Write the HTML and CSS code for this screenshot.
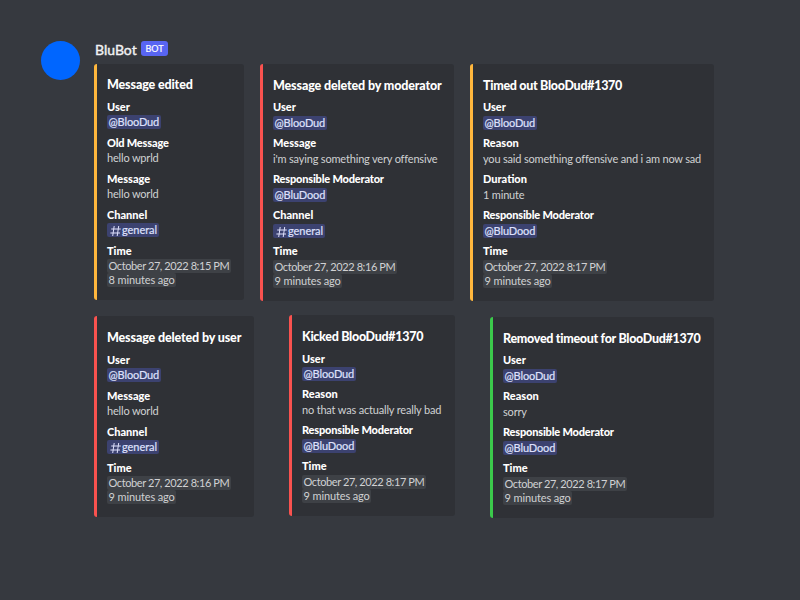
FILE: index.html
```html
<!DOCTYPE html>
<html lang="en">
<head>
<meta charset="utf-8">
<title>BluBot</title>
<link rel="stylesheet" href="styles.css">
</head>
<body>
<svg class="defs" width="0" height="0"><symbol id="hash" viewBox="0 0 11 12"><path d="M4.2 1 2.7 11M8.7 1 7.2 11M1.2 4h9.6M.4 8h9.6" fill="none" stroke="currentColor" stroke-width="1"/></symbol></svg>
<main class="message">
  <div class="avatar"></div>
  <div class="content">
    <header class="author"><span class="name">BluBot</span><span class="badge">BOT</span></header>
    <div class="row">
      <article class="card yellow w150 raised tight">
        <h2 class="plain">Message edited</h2>
        <section><h3>User</h3><p><span class="chip">@BlooDud</span></p></section>
        <section><h3 class="long">Old Message</h3><p>hello wprld</p></section>
        <section><h3>Message</h3><p>hello world</p></section>
        <section><h3>Channel</h3><p><span class="chip channel"><svg class="hash"><use href="#hash"/></svg>general</span></p></section>
        <section><h3>Time</h3><p><time class="stamp">October 27, 2022 8:15 PM</time></p><p><time class="stamp ago">8 minutes ago</time></p></section>
      </article>
      <article class="card red w194">
        <h2 class="plain">Message deleted by moderator</h2>
        <section><h3>User</h3><p><span class="chip">@BlooDud</span></p></section>
        <section><h3>Message</h3><p>i'm saying something very offensive</p></section>
        <section><h3 class="long">Responsible Moderator</h3><p><span class="chip">@BluDood</span></p></section>
        <section><h3>Channel</h3><p><span class="chip channel"><svg class="hash"><use href="#hash"/></svg>general</span></p></section>
        <section><h3>Time</h3><p><time class="stamp">October 27, 2022 8:16 PM</time></p><p><time class="stamp ago">9 minutes ago</time></p></section>
      </article>
      <article class="card yellow w244">
        <h2>Timed out BlooDud#1370</h2>
        <section><h3>User</h3><p><span class="chip">@BlooDud</span></p></section>
        <section><h3>Reason</h3><p>you said something offensive and i am now sad</p></section>
        <section><h3>Duration</h3><p>1 minute</p></section>
        <section><h3 class="long">Responsible Moderator</h3><p><span class="chip">@BluDood</span></p></section>
        <section><h3>Time</h3><p><time class="stamp">October 27, 2022 8:17 PM</time></p><p><time class="stamp ago">9 minutes ago</time></p></section>
      </article>
    </div>
    <div class="row lower">
      <article class="card red w160 tight m1">
        <h2 class="plain">Message deleted by user</h2>
        <section><h3>User</h3><p><span class="chip">@BlooDud</span></p></section>
        <section><h3>Message</h3><p>hello world</p></section>
        <section><h3>Channel</h3><p><span class="chip channel"><svg class="hash"><use href="#hash"/></svg>general</span></p></section>
        <section><h3>Time</h3><p><time class="stamp">October 27, 2022 8:16 PM</time></p><p><time class="stamp ago">9 minutes ago</time></p></section>
      </article>
      <article class="card red w166 tight-first">
        <h2>Kicked BlooDud#1370</h2>
        <section><h3>User</h3><p><span class="chip">@BlooDud</span></p></section>
        <section><h3>Reason</h3><p>no that was actually really bad</p></section>
        <section><h3 class="long">Responsible Moderator</h3><p><span class="chip">@BluDood</span></p></section>
        <section><h3>Time</h3><p><time class="stamp">October 27, 2022 8:17 PM</time></p><p><time class="stamp ago">9 minutes ago</time></p></section>
      </article>
      <article class="card green w224 m2">
        <h2>Removed timeout for BlooDud#1370</h2>
        <section><h3>User</h3><p><span class="chip">@BlooDud</span></p></section>
        <section><h3>Reason</h3><p>sorry</p></section>
        <section><h3 class="long">Responsible Moderator</h3><p><span class="chip">@BluDood</span></p></section>
        <section><h3>Time</h3><p><time class="stamp">October 27, 2022 8:17 PM</time></p><p><time class="stamp ago">9 minutes ago</time></p></section>
      </article>
    </div>
  </div>
</main>
</body>
</html>
```
FILE: styles.css
```css
* { box-sizing: border-box; }
html, body { height: 100%; }
body {
  margin: 0;
  background: #36393f;
  color: #d0d1d3;
  font: 11px/14px Lato, "Noto Sans", sans-serif;
  overflow: hidden;
}
h2, h3, p { margin: 0; white-space: nowrap; }
.defs { position: absolute; }
.message { display: flex; gap: 14px; padding: 41px 0 0 41px; }
.avatar { width: 39px; height: 39px; border-radius: 50%; background: #0066ff; }
.author { display: flex; height: 23px; padding-left: 1px; }
.name { width: 46px; font-size: 14px; line-height: 18px; color: #f2f2f3; -webkit-text-stroke: 0.4px #f2f2f3; }
.badge {
  width: 27px; height: 15px; border-radius: 3px;
  background: #5865f2; color: #fff;
  font-size: 9px; line-height: 15px; text-align: center;
  -webkit-text-stroke: 0.2px #fff;
}
.row { display: flex; align-items: flex-start; gap: 16px; }
.lower { gap: 35px; margin-top: 14px; }
.card {
  height: 237px;
  padding: 14px 0 0 10px;
  border-left: 3px solid #ffb73d;
  border-radius: 3px;
  background: #2f3136;
}
.lower .card { height: 201px; }
.red { border-color: #f9524f; }
.green { border-color: #3bc94b; }
.w150 { width: 150px; }
.w194 { width: 194px; }
.w244 { width: 244px; }
.w160 { width: 160px; }
.w166 { width: 166px; }
.w224 { width: 224px; }
.m1 { margin-top: 1px; }
.m2 { margin-top: 2px; }
.raised { height: 236px; padding-top: 13px; }
h2 { height: 16px; margin-bottom: 6px; font-size: 12.5px; line-height: 15px; font-weight: 900; letter-spacing: -0.3px; color: #fff; }
h2.plain { letter-spacing: -0.14px; }
h3 { height: 14px; margin-bottom: 2px; font-size: 11px; line-height: 14px; font-weight: 900; color: #fff; }
h3.long { letter-spacing: -0.19px; }
p { height: 14px; letter-spacing: -0.18px; }
section { margin-bottom: 6px; }
.tight h2, .tight-first h2 { margin-bottom: 7px; }
.tight h3 { margin-bottom: 1px; }
.tight section { margin-bottom: 7px; }
.tight-first section:nth-of-type(1) h3 { margin-bottom: 1px; }
.chip, .stamp { display: inline-flex; align-items: center; height: 14px; padding: 0 1.5px; border-radius: 2px; vertical-align: top; }
.chip { background: #3c4270; color: #dee0fc; letter-spacing: -0.13px; -webkit-text-stroke: 0.2px #dee0fc; }
.channel { letter-spacing: -0.05px; }
.stamp { background: #3e4146; letter-spacing: -0.41px; }
.ago { letter-spacing: -0.12px; }
.hash { width: 11px; height: 12px; margin: 1px 1px 0 1.5px; }
```
